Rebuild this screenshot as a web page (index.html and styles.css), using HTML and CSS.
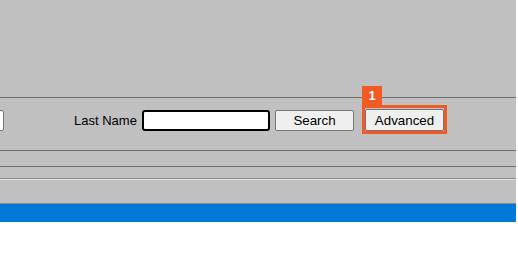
FILE: index.html
```html
<!DOCTYPE html>
<html lang="en">
<head>
    <meta charset="UTF-8">
    <meta name="viewport" content="width=device-width, initial-scale=1.0">
    <title>Search</title>
    <link rel="stylesheet" href="styles.css">
</head>
<body>
    <div class="app">
        <div class="top-area"></div>
        <div class="search-row">
            <input type="text" class="field field-cut">
            <label class="field-label" for="lastName">Last Name</label>
            <input type="text" id="lastName" class="field field-focus">
            <button class="btn">Search</button>
            <span class="highlight">
                <span class="badge">1</span>
                <button class="btn btn-adv">Advanced</button>
            </span>
        </div>
        <div class="strip strip-a"></div>
        <div class="strip strip-b"></div>
        <div class="strip strip-c"></div>
        <div class="status-bar"></div>
    </div>
</body>
</html>
```

FILE: styles.css
```css
* { margin: 0; padding: 0; box-sizing: border-box; }
body {
    font-family: 'Liberation Sans', Arial, sans-serif;
    background: #fff;
    color: #000;
    overflow: hidden;
}
.app {
    width: 516px;
    background: #c0c0c0;
    overflow: hidden;
}
.top-area {
    height: 98px;
    border-bottom: 1px solid #6e6e6e;
}
.search-row {
    height: 53px;
    display: flex;
    align-items: flex-start;
    padding-top: 12px;
    border-bottom: 1px solid #6e6e6e;
}
.field {
    height: 21px;
    background: #fff;
    font-family: inherit;
    font-size: 13px;
}
.field-cut {
    width: 120px;
    margin-left: -116px;
    border: 1px solid #767676;
    border-radius: 2px;
}
.field-label {
    font-size: 13px;
    line-height: 21px;
    margin-left: 70px;
    margin-right: 8px;
    width: 60px;
    white-space: nowrap;
}
.field-focus {
    width: 128px;
    border: 2px solid #000;
    border-radius: 3px;
    margin-right: 5px;
}
.btn {
    width: 79px;
    height: 21px;
    background: #efefef;
    border: 1px solid #767676;
    border-radius: 2px;
    font-family: inherit;
    font-size: 13.33px;
    color: #000;
}
.highlight {
    position: relative;
    display: flex;
    margin-left: 8px;
    margin-top: -5px;
    border: 3px solid #f15a24;
    padding-top: 1px;
}
.badge {
    position: absolute;
    left: -3px;
    top: -22px;
    width: 20px;
    height: 19px;
    background: #f15a24;
    color: #fff;
    font-weight: 700;
    font-size: 13px;
    line-height: 19px;
    text-align: center;
}
.btn-adv {
    height: 22px;
}
.strip-a {
    height: 16px;
    border-bottom: 1px solid #6e6e6e;
}
.strip-b {
    height: 13px;
    border-bottom: 1px solid #e2e2e2;
    box-shadow: inset 0 -1px 0 #8c8c8c;
}
.strip-c {
    height: 24px;
    border-bottom: 1px solid #8a8a8a;
}
.status-bar {
    height: 18px;
    background: #0078d7;
}
```
